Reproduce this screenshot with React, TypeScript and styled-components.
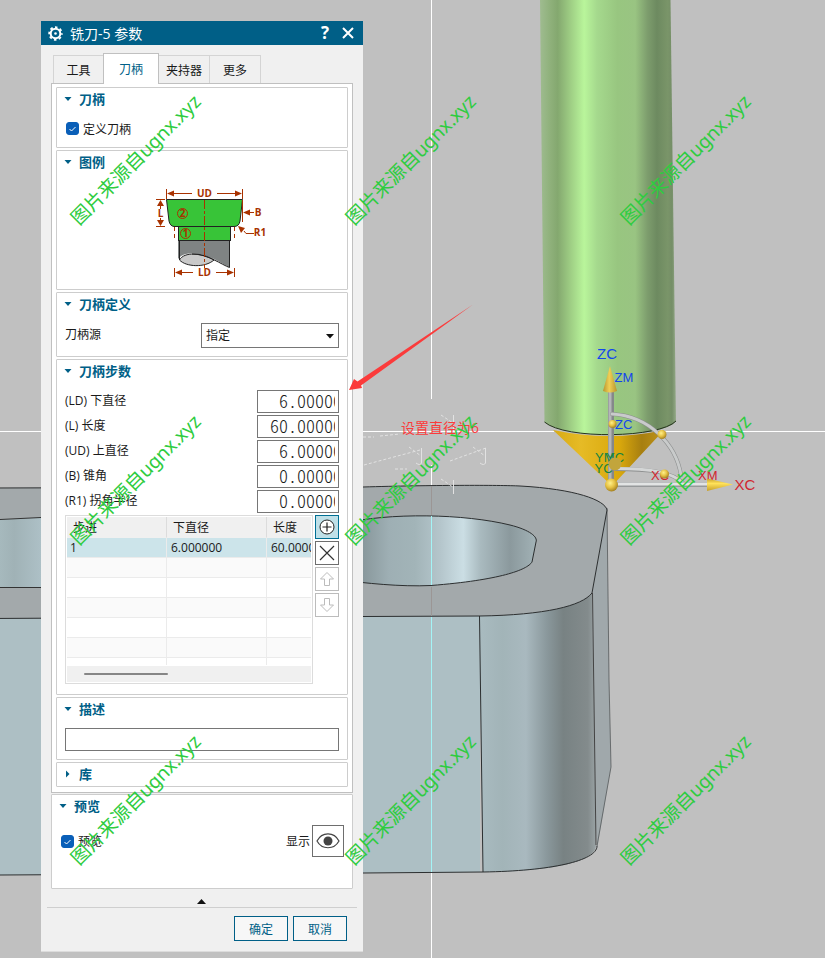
import React, { useId, useState } from "react";
import styled, { createGlobalStyle, css } from "styled-components";

const GlobalStyle = createGlobalStyle`
  * { box-sizing: border-box; }
  body { margin: 0; background: #c0c0c0; }
  body, button, input, select { font-family: "Open Sans", "Noto Sans CJK SC", sans-serif; font-size: 12px; color: #1a1a1a; }
  h1, h2 { margin: 0; font: inherit; }
`;

const Stage = styled.main`
  position: relative;
  min-height: 100vh;
  overflow: hidden;
  padding: 21px 0 6px 41px;
`;

const Canvas = styled.svg`
  position: absolute;
  inset: 0;
  width: 100%;
  height: 100%;
  pointer-events: none;
`;

const Dialog = styled.section`
  position: relative;
  width: 322px;
  max-width: 100%;
  background: #f0f0f0;
  border-bottom: 1px solid #dcdcdc;
`;

const TitleBar = styled.header`
  display: flex;
  align-items: center;
  height: 24px;
  padding: 0 7px;
  gap: 7px;
  background: #005f87;
  color: #fff;
`;

const Title = styled.h1`
  flex: 1;
  padding-top: 2px;
  font-size: 14px;
  line-height: 24px;
`;

const TitleButton = styled.button`
  display: flex;
  align-items: center;
  justify-content: center;
  width: 16px;
  height: 20px;
  padding: 0;
  border: 0;
  background: none;
  color: #fff;
  font-size: 17px;
  font-weight: 700;
  line-height: 20px;
`;

const Content = styled.div`
  padding: 8px 10px 0;
`;

const TabList = styled.div`
  display: flex;
  align-items: flex-end;
  padding-left: 2px;
`;

const Tab = styled.button<{ $active: boolean }>`
  height: 28px;
  width: 51px;
  padding: 0;
  border: 1px solid #d4d4d4;
  border-left-width: 0;
  border-bottom: 0;
  background: #f0f0f0;
  &:first-child { border-left-width: 1px; }
  ${(p) =>
    p.$active &&
    css`
      position: relative;
      height: 31px;
      width: 56px;
      margin: 0 0 -1px -1px;
      border: 1px solid #c0c0c0;
      border-bottom: 0;
      background: #fff;
      color: #005f87;
    `}
`;

const Pane = styled.div`
  display: flex;
  flex-direction: column;
  gap: 2px;
  padding: 3px 4px 5px;
  border: 1px solid #c0c0c0;
  background: #fff;
`;

const GroupBox = styled.section`
  border: 1px solid #cdcdcd;
  border-radius: 1px;
  background: #fff;
`;

const GroupHeading = styled.h2<{ $tight?: boolean }>`
  height: ${(p) => (p.$tight ? 23 : 24)}px;
`;

const GroupToggle = styled.button`
  display: flex;
  align-items: center;
  gap: 7px;
  width: 100%;
  height: 100%;
  padding: 0 7px 2px;
  border: 0;
  background: none;
  color: #005f87;
  font-size: 13px;
  font-weight: 700;
  line-height: 20px;
  text-align: left;
`;

const GroupBody = styled.div`
  padding: 6px 8px 8px;
`;

const PreviewBox = styled(GroupBox)`
  margin-top: 1px;
`;

const PreviewBody = styled.div`
  display: flex;
  align-items: center;
  gap: 2px;
  padding: 6px 8px 31px;
`;

const Check = styled.label`
  display: flex;
  align-items: center;
  gap: 4px;
  height: 21px;
`;

const CheckBox = styled.input`
  appearance: none;
  width: 13px;
  height: 13px;
  margin: 0 0 0 1px;
  border: 1px solid #0a5fb8;
  border-radius: 3px;
  background: #fff;
  &:checked { background: #0a5fb8; }
`;

const CheckWrap = styled.span`
  position: relative;
  display: flex;
  svg { position: absolute; left: 3px; top: 3px; pointer-events: none; }
`;

const Legend = styled.svg`
  display: block;
  margin: 0 auto;
  width: 120px;
  height: 100px;
`;

const Field = styled.label`
  display: flex;
  justify-content: space-between;
  height: 25px;
  line-height: 22px;
`;

const SelectWrap = styled.span`
  position: relative;
  width: 138px;
  svg { position: absolute; right: 5px; top: 11px; pointer-events: none; }
`;

const Select = styled.select`
  appearance: none;
  display: block;
  width: 100%;
  height: 25px;
  padding: 0 20px 0 4px;
  border: 1px solid #767676;
  border-radius: 0;
  background: #fff;
`;

const SourceField = styled(Field)`
  line-height: 24px;
`;

const NumberInput = styled.input<{ $wide: boolean }>`
  width: 82px;
  height: 23px;
  padding: 0 3px 3px ${(p) => (p.$wide ? 12 : 21)}px;
  border: 1px solid #767676;
  background: #fff;
  font-family: "Noto Sans CJK SC", sans-serif;
  font-size: 18px;
  font-weight: 300;
  font-feature-settings: "hwid";
  line-height: 18px;
`;

const TextInput = styled.input`
  display: block;
  width: 100%;
  height: 23px;
  border: 1px solid #767676;
  background: #fff;
`;

const TableArea = styled.div`
  display: flex;
  align-items: flex-start;
  gap: 2px;
  margin-bottom: 2px;
`;

const TableFrame = styled.div`
  flex: 1;
  min-width: 0;
  padding: 1px;
  border: 1px solid #dcdcdc;
`;

const TableClip = styled.div`
  overflow: hidden;
  height: 148px;
`;

const StepTable = styled.table`
  table-layout: fixed;
  width: 300px;
  border-collapse: separate;
  border-spacing: 0;
  th, td {
    height: 20px;
    padding: 0 4px;
    border-right: 1px solid #ebebeb;
    border-bottom: 1px solid #ebebeb;
    font-weight: 400;
    line-height: 19px;
    text-align: left;
    white-space: nowrap;
  }
  td:first-child { padding-left: 3px; }
  th { height: 21px; padding: 1px 6px 0; background: #f0f0f0; border-color: #dcdcdc; border-bottom-color: #f0f0f0; }
`;

const Row = styled.tr<{ $selected?: boolean; $alt?: boolean }>`
  background: ${(p) => (p.$selected ? "#cce4ea" : p.$alt ? "#fafafa" : "#fff")};
`;

const ScrollTrack = styled.div`
  height: 16px;
  padding: 7px 17px;
  margin-top: 1px;
  background: #f0f0f0;
`;

const ScrollThumb = styled.div`
  width: 84px;
  height: 2px;
  border-radius: 1px;
  background: #868686;
`;

const ToolColumn = styled.div`
  display: flex;
  flex-direction: column;
  gap: 2px;
`;

const ToolButton = styled.button<{ $active?: boolean }>`
  display: flex;
  align-items: center;
  justify-content: center;
  width: 24px;
  height: 24px;
  padding: 0;
  border: 1px solid ${(p) => (p.$active ? "#006f94" : "#6e6e6e")};
  background: ${(p) => (p.$active ? "#bfe0e8" : "#fff")};
  color: #333;
  &:disabled { border-color: #bcbcbc; color: #bcbcbc; }
`;

const EyeButton = styled(ToolButton)`
  width: 32px;
  height: 32px;
`;

const ShowLabel = styled.span`
  margin-left: auto;
`;

const MoreButton = styled.button`
  display: flex;
  align-items: center;
  justify-content: center;
  width: 100%;
  height: 18px;
  padding: 6px 2px 0 0;
  border: 0;
  background: none;
`;

const Footer = styled.footer`
  display: flex;
  justify-content: flex-end;
  gap: 5px;
  margin: 0 6px;
  padding: 8px 10px 10px;
  border-top: 1px solid #cfcfcf;
`;

const ActionButton = styled.button`
  width: 54px;
  height: 25px;
  padding: 0;
  border: 1px solid #005f87;
  background: #f7f7f7;
  color: #005f87;
`;

function GearIcon() {
  return (
    <svg width="15" height="15" viewBox="0 0 15 15" aria-hidden="true">
      <circle cx="7.500" cy="7.500" r="4.800" fill="none" stroke="#fff" strokeWidth="2" />
      <circle cx="7.500" cy="7.500" r="6.300" fill="none" stroke="#fff" strokeWidth="1.800" strokeDasharray="2.600 2.348" strokeDashoffset="1.300" />
      <circle cx="7.500" cy="7.500" r="1.300" fill="#fff" />
    </svg>
  );
}

function Chevron({ open }: { open: boolean }) {
  return (
    <svg width="8" height="8" viewBox="0 0 8 8" aria-hidden="true">
      <path d={open ? "M0.5 2H7.5L4 6Z" : "M2 0.5V7.5L5.5 4Z"} fill="#005f87" />
    </svg>
  );
}

function CheckField({ label }: { label: string }) {
  const id = useId();
  const [on, setOn] = useState(true);
  return (
    <Check htmlFor={id}>
      <CheckWrap>
        <CheckBox id={id} type="checkbox" checked={on} onChange={() => setOn(!on)} />
        <svg width="9" height="8" viewBox="0 0 9 8" aria-hidden="true">
          {on && <path d="M1.5 4L3.5 6L7.5 2" fill="none" stroke="#fff" />}
        </svg>
      </CheckWrap>
      {label}
    </Check>
  );
}

function Group({ title, children, initial = true }: { title: string; children?: React.ReactNode; initial?: boolean }) {
  const [open, setOpen] = useState(initial);
  return (
    <GroupBox>
      <GroupHeading $tight={!open}>
        <GroupToggle type="button" aria-expanded={open} onClick={() => setOpen(!open)}>
          <Chevron open={open} />
          {title}
        </GroupToggle>
      </GroupHeading>
      {open && children}
    </GroupBox>
  );
}

function HolderLegend() {
  const c = "#a83200";
  return (
    <Legend viewBox="142 181 120 100" role="img" aria-label="图例" overflow="visible">
      <path d="M178 241V259C184 251 198 252 214 259L229.500 267.500V241Z" fill="#7f8383" />
      <path d="M179.500 260C184 251.500 202 252.500 214 260C205 268 186 267 179.500 260Z" fill="#c9c9c9" stroke="#222" />
      <path d="M179.500 241V260M229.500 241V267.500C222 265 208 254 192 254" fill="none" stroke="#222" />
      <rect x="178.500" y="226.500" width="52" height="14" fill="#38c438" stroke="#222" />
      <path d="M166.500 199.500H242.500L240 221Q239 226.500 234 226.500H174Q170 226 169 221Z" fill="#38c438" stroke="#222" />
      <g stroke={c} fill="none">
        <path d="M204.500 200V268" strokeDasharray="9 2 3 2" />
        <path d="M166.500 189V199M242.500 189V199M172 193.500H192M217 193.500H237M156 199.500H165M156 226.500H165M160.500 204V209M160.500 218V222M242.500 200V222M248 212.500H254M244 231L246 233.500H254M174.500 268V277M234.500 268V277M179 272.500H193M216 272.500H230" />
        <path d="M174.500 227V241M234.500 227V241" strokeDasharray="4 3" />
        <circle cx="182.500" cy="213.500" r="5" />
        <circle cx="185.500" cy="233.500" r="5" />
      </g>
      <g fill={c}>
        <path d="M167 193.500l7-3v6zM242 193.500l-7-3v6zM160.500 200l-3.500 6h7zM160.500 226l-3.500-6h7zM243 212.500l7-3v6zM238 226l7 2-4 5zM175 272.500l7-3v6zM234 272.500l-7-3v6z" />
      </g>
      <g fill={c} fontFamily="Open Sans, sans-serif" fontSize="10" fontWeight="700" textAnchor="middle">
        <text x="204.500" y="197">UD</text>
        <text x="204.500" y="276">LD</text>
        <text x="160.500" y="217">L</text>
        <text x="258" y="216">B</text>
        <text x="260" y="236">R1</text>
        <text x="182.500" y="217">2</text>
        <text x="185.500" y="237">1</text>
      </g>
    </Legend>
  );
}

function Part() {
  return (
    <g>
      <path d="M592 593L607 508L609 680L611 767L597 850L592 760Z" fill="#a0a8ab" />
      <path d="M607 508L609 680L611 767L597 846" fill="none" stroke="#55595a" strokeWidth="0.800" />
      <path d="M0 617L480 616V872L0 875Z" fill="#adbfc4" />
      <path d="M479 616C545 615 582 605 592 593L596 845C597 862 550 872 483 872Z" fill="url(#corner)" />
      <path d="M592.500 593L596 845" stroke="#444" fill="none" />
      <path d="M-10 488L363 487C430 485 500 485 520 486C575 489 605 500 607 510L592 593C582 606 545 615 480 616L363 616.500L-10 618.500Z" fill="#a3a9ab" stroke="#2c2f30" strokeWidth="1" />
      <path d="M-20 520L0 519.500L41 517.500H60V587.500H0L-20 587Z" fill="url(#slotLeft)" stroke="#333" />
      <path d="M340 524C390 512 465 514 510 525C530 530 538 537 536 542L532 562C527 570 500 580 431 585.500C400 587 365 583 340 580Z" fill="url(#slot)" stroke="#2c2f30" />
      <path d="M479.500 616L483 872M0 875L363 873L483 872C550 871 597 861 597 846" fill="none" stroke="#2c2f30" />
    </g>
  );
}

function Cutter() {
  return (
    <g>
      <path d="M553 430Q610 442 664 430L612 486Z" fill="url(#tip)" />
      <path d="M540 0H670.500L676 421C665 438 565 440 544.500 422Z" fill="url(#shank)" />
      <path d="M544.500 422C565 440 660 438 676 421" fill="none" stroke="#24331c" />
      <path d="M0 431.500H41M363 431.500H554M665 431.500H825" stroke="#fff" />
      <g fill="none" strokeLinecap="round">
        <path d="M611 392V480" stroke="#85888a" strokeWidth="6" />
        <path d="M610 392V480" stroke="#b4b6b8" strokeWidth="3" />
        <path d="M612 414C650 416 676 445 681 475" stroke="#8c8e8e" strokeWidth="4" />
        <path d="M612 414C650 416 676 445 681 475" stroke="#c9cbcb" strokeWidth="3" />
        <path d="M615 469C650 469 672 472 683 483" stroke="#8c8e8e" strokeWidth="4" />
        <path d="M615 468.500C650 468.500 672 472 683 483" stroke="#d4d6d6" strokeWidth="3" />
      </g>
      <g fill="#d02630" fontFamily="Liberation Sans, Arial, sans-serif" fontSize="13">
        <text x="651" y="480">XC</text>
        <text x="698" y="480">XM</text>
        <text x="734.500" y="489.500" fontSize="15">XC</text>
      </g>
      <path d="M613 484.500H708" stroke="#96999a" strokeWidth="5" />
      <path d="M613 484H708" stroke="#e2e4e4" strokeWidth="3" />
      <path d="M610 366L603 391Q610 394 617 391Z" fill="url(#gold)" />
      <path d="M733 484.500L707 478.500V491Z" fill="url(#goldDown)" />
      <g fontFamily="Liberation Sans, Arial, sans-serif" fontSize="13">
        <g fill="#1246ee">
          <text x="597" y="359" fontSize="15">ZC</text>
          <text x="614.500" y="381.500">ZM</text>
          <text x="615" y="428.500">ZC</text>
        </g>
        <g fill="#158440">
          <text x="595" y="461.500">YM</text>
          <text x="606" y="461.500">YC</text>
          <text x="594.500" y="472.500">YC</text>
        </g>
      </g>
      <circle cx="615" cy="464" r="6.500" fill="#c2a53c" />
      <g fill="url(#ball)">
        <circle cx="612.500" cy="424" r="4" />
        <circle cx="662" cy="434.500" r="4.500" />
        <circle cx="664.500" cy="474" r="4.500" />
        <circle cx="611.500" cy="485" r="6.500" />
      </g>
    </g>
  );
}

function Scene() {
  return (
    <Canvas viewBox="0 0 825 958" preserveAspectRatio="xMinYMin slice" aria-hidden="true">
      <defs>
        <linearGradient id="shank">
          <stop offset="0" stopColor="#9fbc90" />
          <stop offset="0.080" stopColor="#8eb07a" />
          <stop offset="0.130" stopColor="#84a86f" />
          <stop offset="0.220" stopColor="#9dcc83" />
          <stop offset="0.325" stopColor="#b9f59b" />
          <stop offset="0.420" stopColor="#a5d98d" />
          <stop offset="0.570" stopColor="#98c680" />
          <stop offset="0.700" stopColor="#99c482" />
          <stop offset="0.790" stopColor="#7d9d6d" />
          <stop offset="0.860" stopColor="#6d8a60" />
          <stop offset="0.940" stopColor="#7a9569" />
          <stop offset="0.970" stopColor="#758e67" />
          <stop offset="1" stopColor="#93a987" />
        </linearGradient>
        <linearGradient id="tip">
          <stop offset="0" stopColor="#d8aa14" />
          <stop offset="0.250" stopColor="#e6bb26" />
          <stop offset="0.600" stopColor="#d9a80c" />
          <stop offset="0.800" stopColor="#a77f10" />
          <stop offset="1" stopColor="#c0951a" />
        </linearGradient>
        <linearGradient id="gold">
          <stop offset="0" stopColor="#b8942e" />
          <stop offset="0.450" stopColor="#f0cf55" />
          <stop offset="1" stopColor="#b8942e" />
        </linearGradient>
        <linearGradient id="goldDown" x2="0" y2="1">
          <stop offset="0" stopColor="#c79f28" />
          <stop offset="0.400" stopColor="#ffe25a" />
          <stop offset="1" stopColor="#c79f28" />
        </linearGradient>
        <radialGradient id="ball" cx="0.400" cy="0.350" r="0.700">
          <stop offset="0" stopColor="#fff08a" />
          <stop offset="0.500" stopColor="#e6c244" />
          <stop offset="1" stopColor="#9c781c" />
        </radialGradient>
        <linearGradient id="corner">
          <stop offset="0" stopColor="#a9bbc0" />
          <stop offset="0.200" stopColor="#a2b4b8" />
          <stop offset="0.400" stopColor="#a9b9bf" />
          <stop offset="0.580" stopColor="#8a989c" />
          <stop offset="0.720" stopColor="#788283" />
          <stop offset="0.930" stopColor="#838b8c" />
          <stop offset="1" stopColor="#9aa3a5" />
        </linearGradient>
        <linearGradient id="slot" gradientUnits="userSpaceOnUse" x1="363" x2="536">
          <stop offset="0" stopColor="#89989c" />
          <stop offset="0.150" stopColor="#9eafb4" />
          <stop offset="0.300" stopColor="#a2b4b8" />
          <stop offset="0.450" stopColor="#b5c6cc" />
          <stop offset="0.580" stopColor="#cbdee4" />
          <stop offset="0.680" stopColor="#a9babf" />
          <stop offset="0.850" stopColor="#8b999d" />
          <stop offset="1" stopColor="#a2b2b6" />
        </linearGradient>
        <linearGradient id="slotLeft" gradientUnits="userSpaceOnUse" x1="0" x2="41">
          <stop offset="0" stopColor="#a6b9bd" />
          <stop offset="0.350" stopColor="#a0b2b6" />
          <stop offset="1" stopColor="#adc0c6" />
        </linearGradient>
      </defs>
      <path d="M431.500 0V399M431.500 465V958" stroke="#fff" />
      <Part />
      <path d="M431.500 516V585M431.500 617V872" stroke="#a4f4f6" />
      <path d="M431.500 486V515M431.500 587V616" stroke="#9b9695" />
      <g fill="none" stroke="#e2e2e2" strokeDasharray="3 2">
        <path d="M363 437L374 437M380 436L400 434M364 465L420 450M450 461L486 448M395 469H407M441 415L453 423M409 447L421 456M473 447L485 456M441 479L453 487" />
        <path d="M453.500 415V432M421.500 448V463Q420 466 416 463M485.500 448V463Q484 466 480 463M453.500 480V494" strokeDasharray="none" />
      </g>
      <Cutter />
    </Canvas>
  );
}

function Overlay() {
  const steps = [0, 1, 2];
  return (
    <Canvas viewBox="0 0 825 958" preserveAspectRatio="xMinYMin slice">
      <path d="M473 304.500L361 385.500L362 388L349 390L354 379L357.500 381.500Z" fill="#fb3b3b" />
      <text x="401" y="433" fill="#fb3b3b" fontFamily="Open Sans, Noto Sans CJK SC, sans-serif" fontSize="14">设置直径为6</text>
      <g fill="#2ecc40" fontFamily="Noto Sans, Noto Sans CJK SC, sans-serif" fontSize="19">
        {steps.map((row) =>
          steps.map((col) => (
            <text key={`${row}-${col}`} transform={`translate(${79 + col * 275} ${226 + row * 320}) rotate(-45)`}>
              图片来源自ugnx.xyz
            </text>
          ))
        )}
      </g>
    </Canvas>
  );
}

const tabs = ["工具", "刀柄", "夹持器", "更多"];
const parameters = [
  ["(LD) 下直径", "6.00000"],
  ["(L) 长度", "60.00000"],
  ["(UD) 上直径", "6.00000"],
  ["(B) 锥角", "0.00000"],
  ["(R1) 拐角半径", "0.00000"],
];

export default function App() {
  const [tab, setTab] = useState("刀柄");
  return (
    <Stage>
      <GlobalStyle />
      <Scene />
      <Dialog role="dialog" aria-label="铣刀-5 参数">
        <TitleBar>
          <GearIcon />
          <Title>铣刀-5 参数</Title>
          <TitleButton type="button" aria-label="帮助">?</TitleButton>
          <TitleButton type="button" aria-label="关闭">
            <svg width="12" height="12" viewBox="0 0 12 12"><path d="M1 1L11 11M11 1L1 11" stroke="#fff" strokeWidth="2" /></svg>
          </TitleButton>
        </TitleBar>
        <Content>
          <TabList role="tablist">
            {tabs.map((name) => (
              <Tab key={name} type="button" role="tab" aria-selected={tab === name} $active={tab === name} onClick={() => setTab(name)}>
                {name}
              </Tab>
            ))}
          </TabList>
          <Pane>
            <Group title="刀柄">
              <GroupBody><CheckField label="定义刀柄" /></GroupBody>
            </Group>
            <Group title="图例">
              <GroupBody><HolderLegend /></GroupBody>
            </Group>
            <Group title="刀柄定义">
              <GroupBody>
                <SourceField>
                  刀柄源
                  <SelectWrap>
                    <Select defaultValue="指定"><option>指定</option></Select>
                    <svg width="8" height="5" viewBox="0 0 8 5" aria-hidden="true"><path d="M0 0H8L4 4.500Z" fill="#111" /></svg>
                  </SelectWrap>
                </SourceField>
              </GroupBody>
            </Group>
            <Group title="刀柄步数">
              <GroupBody>
                {parameters.map(([label, value]) => (
                  <Field key={label}>
                    {label}
                    <NumberInput defaultValue={value} $wide={value.length > 7} />
                  </Field>
                ))}
                <TableArea>
                  <TableFrame>
                    <TableClip>
                      <StepTable>
                        <thead>
                          <tr><th>步进</th><th>下直径</th><th>长度</th></tr>
                        </thead>
                        <tbody>
                          <Row $selected><td>1</td><td>6.000000</td><td>60.000000</td></Row>
                          {[1, 2, 3, 4, 5, 6].map((n) => (
                            <Row key={n} $alt={n % 2 === 1}><td /><td /><td /></Row>
                          ))}
                        </tbody>
                      </StepTable>
                    </TableClip>
                    <ScrollTrack><ScrollThumb /></ScrollTrack>
                  </TableFrame>
                  <ToolColumn>
                    <ToolButton type="button" aria-label="添加" $active>
                      <svg width="18" height="18" viewBox="0 0 18 18"><circle cx="9" cy="9" r="7" fill="#fff" stroke="#222" /><path d="M9 4.500V13.500M4.500 9H13.500" stroke="#222" strokeWidth="1.200" /></svg>
                    </ToolButton>
                    <ToolButton type="button" aria-label="移除">
                      <svg width="18" height="18" viewBox="0 0 18 18"><path d="M2 2L16 16M16 2L2 16" stroke="#333" strokeWidth="1.200" /></svg>
                    </ToolButton>
                    <ToolButton type="button" aria-label="上移" disabled>
                      <svg width="16" height="16" viewBox="0 0 16 16"><path d="M8 1.500L14.500 8H10.500V14.500H5.500V8H1.500Z" fill="none" stroke="currentColor" /></svg>
                    </ToolButton>
                    <ToolButton type="button" aria-label="下移" disabled>
                      <svg width="16" height="16" viewBox="0 0 16 16"><path d="M8 14.500L14.500 8H10.500V1.500H5.500V8H1.500Z" fill="none" stroke="currentColor" /></svg>
                    </ToolButton>
                  </ToolColumn>
                </TableArea>
              </GroupBody>
            </Group>
            <Group title="描述">
              <GroupBody><TextInput aria-label="描述" /></GroupBody>
            </Group>
            <Group title="库" initial={false} />
          </Pane>
          <PreviewBox>
            <GroupHeading>
              <GroupToggle type="button" aria-expanded="true">
                <Chevron open />
                预览
              </GroupToggle>
            </GroupHeading>
            <PreviewBody>
              <CheckField label="预览" />
              <ShowLabel id="show-label">显示</ShowLabel>
              <EyeButton type="button" aria-labelledby="show-label">
                <svg width="24" height="18" viewBox="0 0 24 18"><path d="M1 9C6 -0.500 18 -0.500 23 9C18 18 6 18 1 9Z" fill="none" stroke="#444" strokeWidth="1.200" /><circle cx="12" cy="9" r="4.500" fill="#444" /></svg>
              </EyeButton>
            </PreviewBody>
          </PreviewBox>
        </Content>
        <MoreButton type="button" aria-label="收起">
          <svg width="9" height="5" viewBox="0 0 9 5"><path d="M0 5H9L4.500 0Z" fill="#111" /></svg>
        </MoreButton>
        <Footer>
          <ActionButton type="button">确定</ActionButton>
          <ActionButton type="button">取消</ActionButton>
        </Footer>
      </Dialog>
      <Overlay />
    </Stage>
  );
}
